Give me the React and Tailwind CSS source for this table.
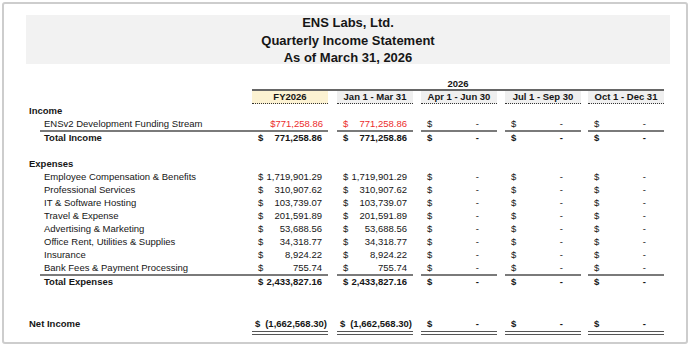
import React from 'react';

const expenses = [
  ['Employee Compensation & Benefits', '1,719,901.29'],
  ['Professional Services', '310,907.62'],
  ['IT & Software Hosting', '103,739.07'],
  ['Travel & Expense', '201,591.89'],
  ['Advertising & Marketing', '53,688.56'],
  ['Office Rent, Utilities & Supplies', '34,318.77'],
  ['Insurance', '8,924.22'],
  ['Bank Fees & Payment Processing', '755.74'],
];

const headers = ['FY2026', 'Jan 1 - Mar 31', 'Apr 1 - Jun 30', 'Jul 1 - Sep 30', 'Oct 1 - Dec 31'];

// gaps between the five numeric columns
const gaps = ['w-[9px]', 'w-[8px]', 'w-[8px]', 'w-[7px]'];

function Cell({ cell, line }) {
  const border = line === 'single' ? 'border-b-2 border-[#7a7a7a]' : line === 'double' ? 'border-b-[4px] border-double border-[#555]' : '';

  if (!cell) return <div className={`w-[76px] h-full ${border}`} />;

  // plain dash (accounting zero)
  if (cell.dash) {
    return (
      <div className={`w-[76px] h-full flex justify-between pl-[6px] pr-[18px] ${border} ${cell.bold ? 'font-bold' : ''}`}>
        <span>$</span>
        <span>-</span>
      </div>
    );
  }

  // value with the $ glued on
  if (cell.joined) {
    return (
      <div className={`w-[76px] h-full text-right pr-[5px] ${border} ${cell.red ? 'text-[#ec2d2d]' : ''}`}>
        {cell.value}
      </div>
    );
  }

  const pad = cell.neg ? 'pl-[3px] pr-[1px]' : 'pl-[6px] pr-[6px]';
  return (
    <div className={`w-[76px] h-full flex justify-between ${pad} ${border} ${cell.bold ? 'font-bold' : ''} ${cell.red ? 'text-[#ec2d2d]' : ''}`}>
      <span>$</span>
      <span>{cell.value}</span>
    </div>
  );
}

function Row({ label, heading, bold, cells, line, height = 'h-[13px]' }) {
  const labelLine = line === 'single' ? 'border-b-2 border-[#7a7a7a]' : '';
  return (
    <div className={`flex ${height} leading-[12px] items-stretch`}>
      <div className="w-[226px] h-full">
        {heading ? (
          <div className="pl-[3px] font-bold">{label}</div>
        ) : (
          <div className={`ml-[14px] h-full pl-[4px] ${labelLine} ${bold ? 'font-bold' : ''}`}>{label}</div>
        )}
      </div>
      {cells
        ? cells.map((c, i) => (
            <React.Fragment key={i}>
              <Cell cell={c} line={line} />
              {i < 4 && <div className={gaps[i]} />}
            </React.Fragment>
          ))
        : null}
    </div>
  );
}

const dashes = (bold) => [1, 2, 3].map(() => ({ dash: true, bold }));

export default function App() {
  return (
    <div className="w-[690px] h-[348px] bg-white p-[2px] text-[#161616] font-['Liberation_Sans',Arial,sans-serif]">
      <div className="h-[342px] border-2 border-[#cdcdcd] rounded-[3px] pl-[22px] pt-[11px]">
        {/* title band */}
        <div className="w-[644px] h-[49px] bg-[#f2f2f2] flex flex-col justify-center items-center text-[13px] font-bold leading-[17.5px] pt-[2px]">
          <div>ENS Labs, Ltd.</div>
          <div>Quarterly Income Statement</div>
          <div>As of March 31, 2026</div>
        </div>

        <div className="text-[9.5px]">
          {/* year header */}
          <div className="flex mt-[13px]">
            <div className="w-[226px]" />
            <div className="w-[412px] h-[14px] border-b-2 border-[#666] text-center font-bold leading-[14px]">2026</div>
          </div>
          <div className="flex h-[13px] font-bold leading-[12px]">
            <div className="w-[226px]" />
            {headers.map((h, i) => (
              <React.Fragment key={h}>
                <div className={`w-[76px] h-full text-center border-b border-dotted border-[#333] ${i === 0 ? 'bg-[#fcf2d2]' : 'bg-[#efefef]'}`}>
                  {h}
                </div>
                {i < 4 && <div className={gaps[i]} />}
              </React.Fragment>
            ))}
          </div>

          <div className="mt-[1px]">
            <Row label="Income" heading />
            <Row
              label="ENSv2 Development Funding Stream"
              line="single"
              height="h-[14px]"
              cells={[
                { joined: true, red: true, value: '$771,258.86' },
                { red: true, value: '771,258.86' },
                ...dashes(false),
              ]}
            />
            <Row
              label="Total Income"
              bold
              cells={[
                { bold: true, value: '771,258.86' },
                { bold: true, value: '771,258.86' },
                ...dashes(true),
              ]}
            />
            <div className="h-[13px]" />
            <Row label="Expenses" heading />
            {expenses.map(([name, amt], i) => (
              <Row
                key={name}
                label={name}
                line={i === expenses.length - 1 ? 'single' : undefined}
                height={i === expenses.length - 1 ? 'h-[14px]' : 'h-[13px]'}
                cells={[{ value: amt }, { value: amt }, ...dashes(false)]}
              />
            ))}
            <Row
              label="Total Expenses"
              bold
              cells={[
                { bold: true, value: '2,433,827.16' },
                { bold: true, value: '2,433,827.16' },
                ...dashes(true),
              ]}
            />
            <div className="h-[29px]" />
            <Row
              label="Net Income"
              heading
              line="double"
              height="h-[17px]"
              cells={[
                { bold: true, neg: true, value: '(1,662,568.30)' },
                { bold: true, neg: true, value: '(1,662,568.30)' },
                ...dashes(true),
              ]}
            />
          </div>
        </div>
      </div>
    </div>
  );
}
